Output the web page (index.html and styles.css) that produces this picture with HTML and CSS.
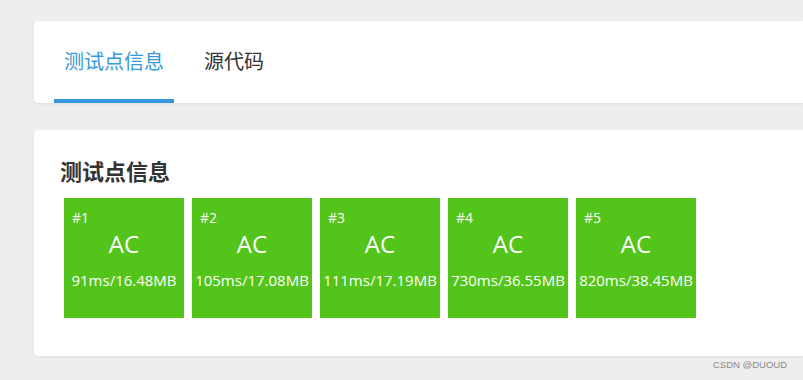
FILE: index.html
```html
<!DOCTYPE html>
<html>
<head>
<meta charset="utf-8">
<link rel="stylesheet" href="styles.css">
</head>
<body>
<div class="page">
  <div class="card tabs-card">
    <div class="tabs">
      <div class="tab active">测试点信息</div>
      <div class="tab">源代码</div>
    </div>
  </div>
  <div class="card cases-card">
    <h2 class="title">测试点信息</h2>
    <div class="cases">
      <div class="case"><div class="num">#1</div><div class="res">AC</div><div class="info">91ms/16.48MB</div></div>
      <div class="case"><div class="num">#2</div><div class="res">AC</div><div class="info">105ms/17.08MB</div></div>
      <div class="case"><div class="num">#3</div><div class="res">AC</div><div class="info">111ms/17.19MB</div></div>
      <div class="case"><div class="num">#4</div><div class="res">AC</div><div class="info">730ms/36.55MB</div></div>
      <div class="case"><div class="num">#5</div><div class="res">AC</div><div class="info">820ms/38.45MB</div></div>
    </div>
  </div>
</div>
<div class="watermark">CSDN @DUOUD</div>
</body>
</html>
```
FILE: styles.css
```css
html, body {
  margin: 0;
  padding: 0;
  background: #eeeeee;
  width: 803px;
  height: 380px;
  overflow: hidden;
  font-family: "Open Sans", "Noto Sans CJK SC", sans-serif;
}
.page {
  padding: 21px 0 0 34px;
  display: flex;
  flex-direction: column;
  gap: 27px;
}
.card {
  background: #fff;
  border-radius: 4px 0 0 4px;
  width: 769px;
  box-shadow: 0 1px 3px rgba(0,0,0,0.08);
}
.tabs-card {
  height: 82px;
}
.tabs {
  display: flex;
  padding-left: 20px;
  height: 82px;
}
.tab {
  box-sizing: border-box;
  height: 82px;
  padding: 1px 10px 0;
  margin-right: 10px;
  display: flex;
  align-items: center;
  font-size: 20px;
  color: #333;
  font-family: "Noto Sans CJK SC", sans-serif;
  border-bottom: 4px solid transparent;
}
.tab.active {
  color: #3498db;
  border-bottom-color: #3498db;
  margin-right: 20px;
}
.cases-card {
  height: 226px;
  box-sizing: border-box;
  padding: 23px 0 0 26px;
}
.title {
  margin: 0;
  font-family: "Noto Sans CJK SC", sans-serif;
  font-size: 22px;
  font-weight: bold;
  color: #333;
  line-height: 34px;
}
.cases {
  display: flex;
  gap: 8px;
  margin-top: 11px;
  margin-left: 4px;
}
.case {
  width: 120px;
  height: 120px;
  background: #52c41a;
  color: #fff;
  box-sizing: border-box;
  padding-top: 10px;
  display: flex;
  flex-direction: column;
}
.num {
  font-size: 14px;
  line-height: 20px;
  padding-left: 8px;
}
.res {
  font-size: 24px;
  line-height: 32px;
  text-align: center;
}
.info {
  font-size: 15px;
  text-align: center;
  line-height: 20px;
  margin-top: 10px;
  white-space: nowrap;
}
.watermark {
  position: absolute;
  left: 713px;
  top: 359px;
  font-family: "Liberation Sans", sans-serif;
  font-size: 9.5px;
  color: #888;
}
```
